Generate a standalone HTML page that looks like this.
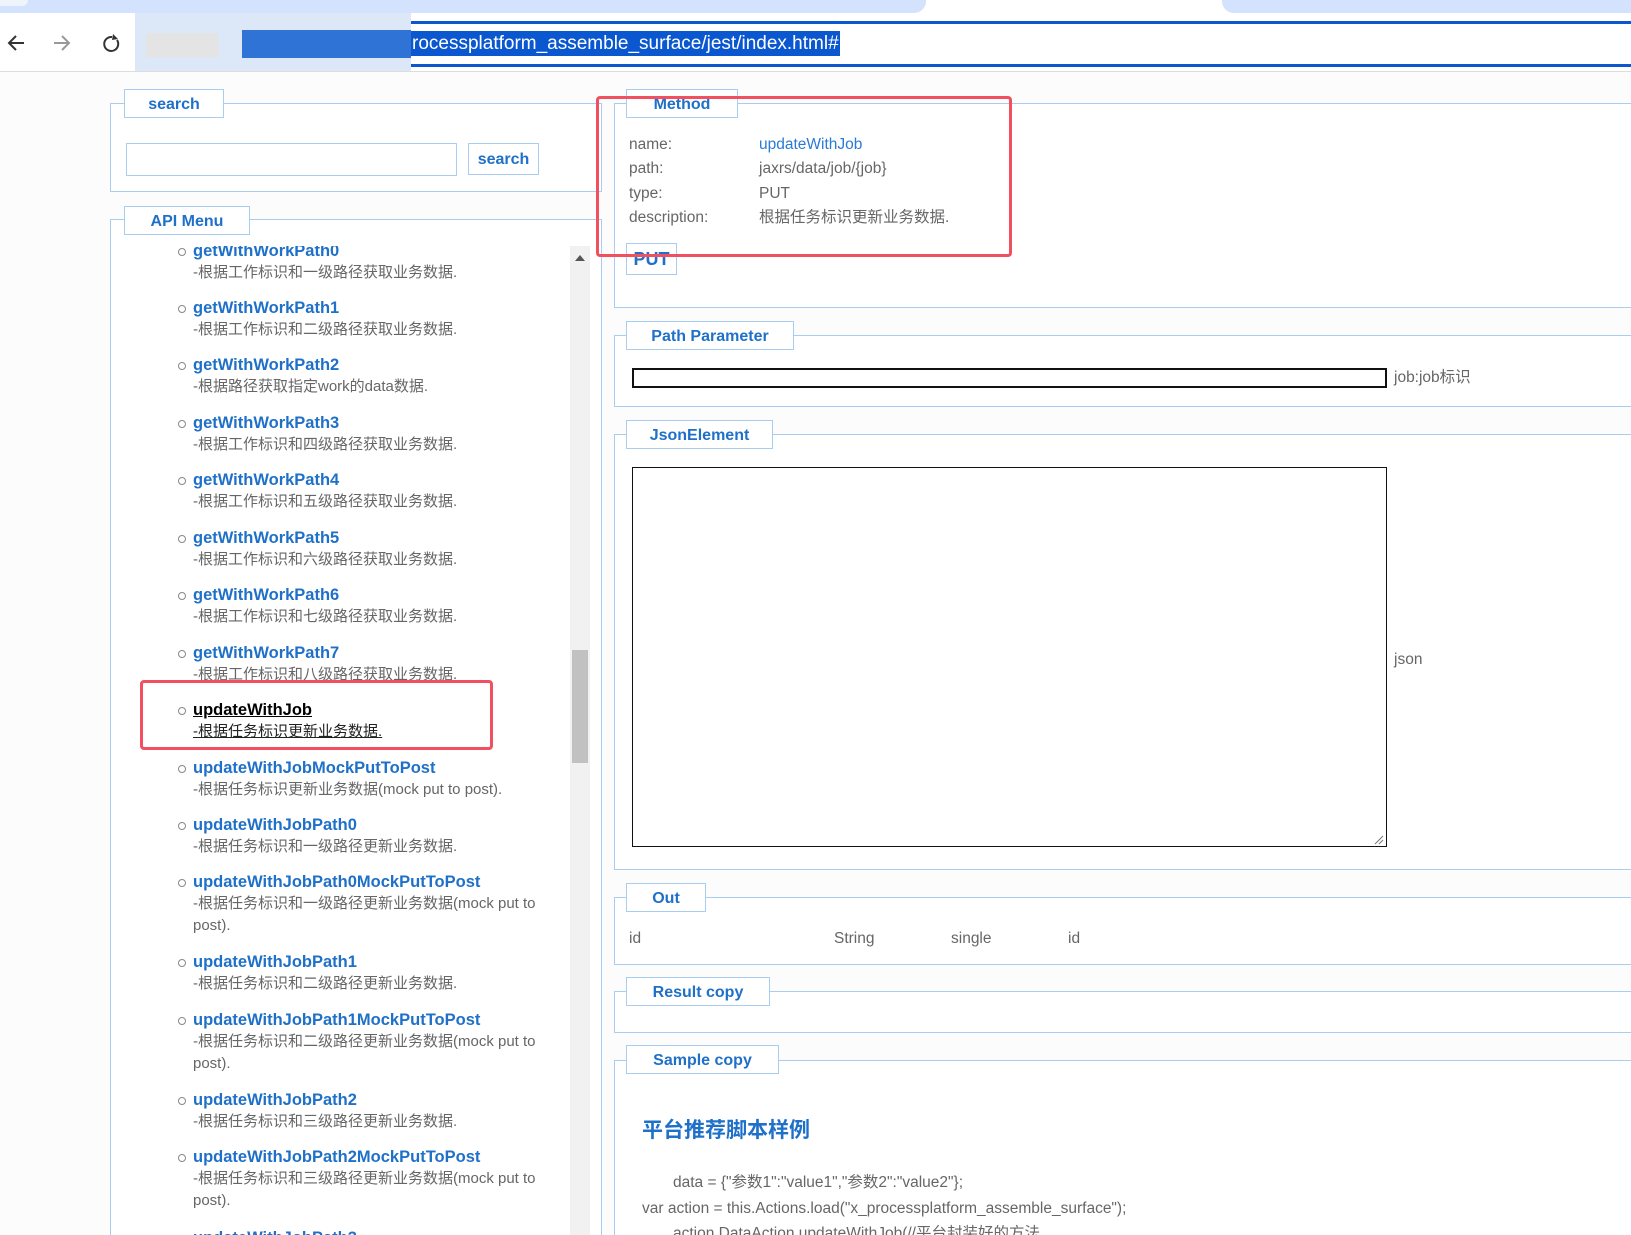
<!DOCTYPE html>
<html style="overflow:hidden;width:1631px;height:1235px"><head><meta charset="utf-8"><style>
*{margin:0;padding:0;box-sizing:border-box}
body{width:1631px;height:1235px;overflow:hidden;background:#fcfcfc;font-family:"Liberation Sans","Noto Sans CJK SC",sans-serif;position:relative}
.a{position:absolute}
.fs{position:absolute;border:1px solid #a9cdf0;background:#fff}
.lg{position:absolute;border:1px solid #a9cdf0;background:#fff;color:#1f70c8;font-weight:bold;font-size:16px;height:29px;line-height:29px;text-align:center}
.it{position:absolute;left:193px;font-size:15px;line-height:22px;color:#666;width:370px}
.it b{display:block;color:#1f70c8;font-size:16.5px}
.it:before{content:"";position:absolute;left:-15px;top:8px;width:6px;height:6px;border:1.2px solid #888;border-radius:50%}
.t{position:absolute;font-size:15.5px;color:#666;line-height:22px}
</style></head><body>
<div class="a" style="left:0;top:0;width:1631px;height:13px;background:#fff"></div>
<div class="a" style="left:0;top:0;width:926px;height:13px;background:#d3e3fd;border-radius:0 0 12px 0"></div>
<div class="a" style="left:1222px;top:0;width:409px;height:13px;background:#d3e3fd;border-radius:0 0 0 12px"></div>
<div class="a" style="left:0;top:0;width:28px;height:6px;background:#eef3fc;border-radius:0 0 8px 0"></div>
<div class="a" style="left:0;top:13px;width:1631px;height:59px;background:#fff;border-bottom:1px solid #ddd"></div>
<svg class="a" style="left:6px;top:32px" width="120" height="22" viewBox="0 0 120 22"><path d="M18 11H4M10 4l-7 7 7 7" stroke="#333" stroke-width="2" fill="none"/><path d="M48 11h14M56 4l7 7-7 7" stroke="#999" stroke-width="2" fill="none"/><path d="M106 5a7 7 0 1 0 5 3" stroke="#333" stroke-width="2" fill="none"/><path d="M107 2l5 5-6 1z" fill="#333"/></svg>
<div class="a" style="left:411px;top:21px;width:1220px;height:3px;background:#0b57d0"></div>
<div class="a" style="left:411px;top:64px;width:1220px;height:3px;background:#0b57d0"></div>
<div class="a" style="left:135px;top:13px;width:276px;height:58px;background:#dce7f7"></div>
<div class="a" style="left:146px;top:33px;width:72px;height:24px;background:#e4e4e4"></div>
<div class="a" style="left:242px;top:30px;width:169px;height:28px;background:#2f73d6"></div>
<div class="a" style="left:411px;top:31px;height:25px;background:#0b57d0;color:#fff;font-size:19px;line-height:25px;padding:0 1px">rocessplatform_assemble_surface/jest/index.html#</div>

<div class="fs" style="left:110px;top:103px;width:492px;height:89px"></div>
<div class="lg" style="left:124px;top:89px;width:100px">search</div>
<div class="a" style="left:126px;top:143px;width:331px;height:33px;border:1px solid #a9cdf0;background:#fff"></div>
<div class="lg" style="left:468px;top:143px;width:71px;height:32px;line-height:31px">search</div>

<div class="fs" style="left:110px;top:219px;width:492px;height:1030px"></div>
<div class="lg" style="left:124px;top:206px;width:126px">API Menu</div>
<div class="a" style="left:570px;top:246px;width:20px;height:989px;background:#f1f1f1"></div>
<div class="a" style="left:572px;top:650px;width:16px;height:113px;background:#c1c1c1"></div>
<div class="a" style="left:575px;top:255px;width:0;height:0;border:5px solid transparent;border-bottom:6px solid #555;border-top:0"></div>
<div class="a" style="left:112px;top:246px;width:456px;height:989px;overflow:hidden">
<div class="a" style="left:-112px;top:-246px;width:700px;height:1600px">
<div class="it" style="top:240px"><b>getWithWorkPath0</b>-根据工作标识和一级路径获取业务数据.</div>
<div class="it" style="top:297px"><b>getWithWorkPath1</b>-根据工作标识和二级路径获取业务数据.</div>
<div class="it" style="top:354px"><b>getWithWorkPath2</b>-根据路径获取指定work的data数据.</div>
<div class="it" style="top:412px"><b>getWithWorkPath3</b>-根据工作标识和四级路径获取业务数据.</div>
<div class="it" style="top:469px"><b>getWithWorkPath4</b>-根据工作标识和五级路径获取业务数据.</div>
<div class="it" style="top:527px"><b>getWithWorkPath5</b>-根据工作标识和六级路径获取业务数据.</div>
<div class="it" style="top:584px"><b>getWithWorkPath6</b>-根据工作标识和七级路径获取业务数据.</div>
<div class="it" style="top:642px"><b>getWithWorkPath7</b>-根据工作标识和八级路径获取业务数据.</div>
<div class="it" style="top:699px;color:#222;text-decoration:underline"><b style="color:#000;text-decoration:underline">updateWithJob</b>-根据任务标识更新业务数据.</div>
<div class="it" style="top:757px"><b>updateWithJobMockPutToPost</b>-根据任务标识更新业务数据(mock put to post).</div>
<div class="it" style="top:814px"><b>updateWithJobPath0</b>-根据任务标识和一级路径更新业务数据.</div>
<div class="it" style="top:871px"><b>updateWithJobPath0MockPutToPost</b>-根据任务标识和一级路径更新业务数据(mock put to post).</div>
<div class="it" style="top:951px"><b>updateWithJobPath1</b>-根据任务标识和二级路径更新业务数据.</div>
<div class="it" style="top:1009px"><b>updateWithJobPath1MockPutToPost</b>-根据任务标识和二级路径更新业务数据(mock put to post).</div>
<div class="it" style="top:1089px"><b>updateWithJobPath2</b>-根据任务标识和三级路径更新业务数据.</div>
<div class="it" style="top:1146px"><b>updateWithJobPath2MockPutToPost</b>-根据任务标识和三级路径更新业务数据(mock put to post).</div>
<div class="it" style="top:1227px"><b>updateWithJobPath3</b>-根据任务标识和三级路径更新业务数据.</div>
</div></div>
<div class="a" style="left:140px;top:680px;width:353px;height:70px;border:3px solid #f0505f;border-radius:4px"></div>

<div class="fs" style="left:614px;top:103px;width:1030px;height:205px"></div>
<div class="lg" style="left:626px;top:89px;width:112px">Method</div>
<div class="t" style="left:629px;top:134px">name:</div><div class="t" style="left:759px;top:134px;color:#2a7bd6">updateWithJob</div>
<div class="t" style="left:629px;top:158px">path:</div><div class="t" style="left:759px;top:158px">jaxrs/data/job/{job}</div>
<div class="t" style="left:629px;top:183px">type:</div><div class="t" style="left:759px;top:183px">PUT</div>
<div class="t" style="left:629px;top:207px">description:</div><div class="t" style="left:759px;top:207px">根据任务标识更新业务数据.</div>
<div class="lg" style="left:626px;top:243px;width:51px;height:32px;line-height:30px;font-size:18px">PUT</div>
<div class="a" style="left:596px;top:96px;width:416px;height:161px;border:3px solid #f0505f;border-radius:4px"></div>

<div class="fs" style="left:614px;top:335px;width:1030px;height:72px"></div>
<div class="lg" style="left:626px;top:321px;width:168px">Path Parameter</div>
<div class="a" style="left:632px;top:368px;width:755px;height:20px;border:2px solid #111;background:#fff"></div>
<div class="t" style="left:1394px;top:367px">job:job标识</div>

<div class="fs" style="left:614px;top:434px;width:1030px;height:436px"></div>
<div class="lg" style="left:626px;top:420px;width:147px">JsonElement</div>
<div class="a" style="left:632px;top:467px;width:755px;height:380px;border:1px solid #111;background:#fff"></div>
<svg class="a" style="left:1374px;top:835px" width="10" height="10"><path d="M9 1L1 9M9 5L5 9" stroke="#777"/></svg>
<div class="t" style="left:1394px;top:649px">json</div>

<div class="fs" style="left:614px;top:897px;width:1030px;height:68px"></div>
<div class="lg" style="left:626px;top:883px;width:80px">Out</div>
<div class="t" style="left:629px;top:928px">id</div><div class="t" style="left:834px;top:928px">String</div><div class="t" style="left:951px;top:928px">single</div><div class="t" style="left:1068px;top:928px">id</div>

<div class="fs" style="left:614px;top:991px;width:1030px;height:42px"></div>
<div class="lg" style="left:626px;top:977px;width:144px">Result copy</div>

<div class="fs" style="left:614px;top:1060px;width:1030px;height:190px"></div>
<div class="lg" style="left:626px;top:1045px;width:153px">Sample copy</div>
<div class="a" style="left:642px;top:1114px;font-size:21px;font-weight:bold;color:#1f70c8">平台推荐脚本样例</div>
<div class="t" style="left:673px;top:1172px">data = {"参数1":"value1","参数2":"value2"};</div>
<div class="t" style="left:642px;top:1198px">var action = this.Actions.load("x_processplatform_assemble_surface");</div>
<div class="t" style="left:673px;top:1223px">action.DataAction.updateWithJob(//平台封装好的方法</div>
</body></html>
